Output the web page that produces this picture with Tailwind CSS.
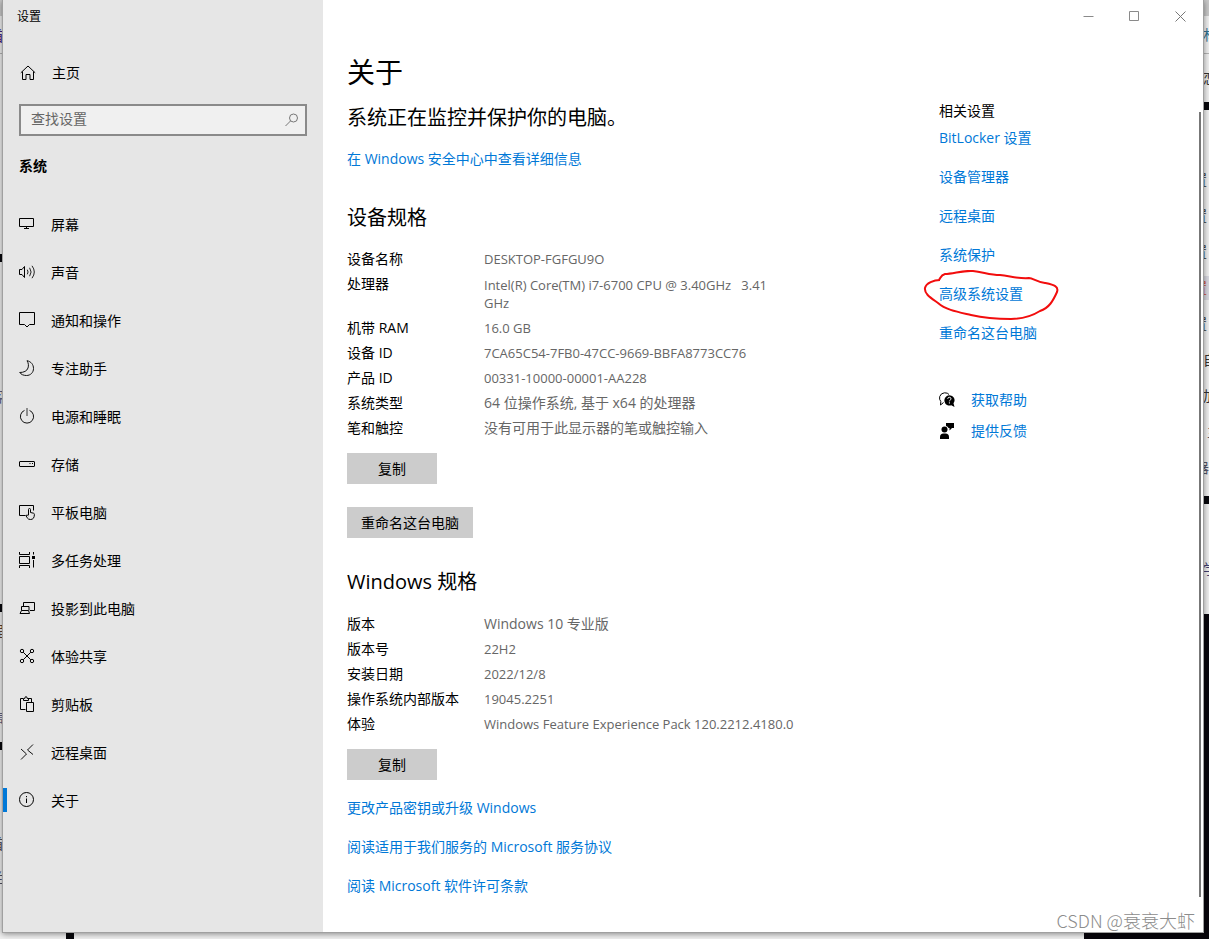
<!DOCTYPE html>
<html lang="zh-CN">
<head>
<meta charset="utf-8">
<title>设置</title>
<script src="https://cdn.jsdelivr.net/npm/@tailwindcss/browser@4"></script>
</head>
<body class="relative flex min-h-screen overflow-x-hidden bg-[#f0f0f0] pl-[2px] pr-[5px] pb-[6px] font-['Open_Sans','Noto_Sans_CJK_SC',sans-serif] text-sm leading-[18px] text-black">

<!-- Desktop behind the window -->
<div class="absolute inset-0 overflow-hidden" aria-hidden="true">
  <div class="absolute left-0 top-0 h-4 w-full bg-[#c8c8c8]"></div>
  <div class="absolute left-0 top-[53px] h-px w-full bg-[#b4b4b4]"></div>
  <div class="absolute left-0 top-[254px] h-2 w-1 bg-[#08080c]"></div>
  <div class="absolute left-0 top-[604px] h-2 w-1 bg-[#08080c]"></div>
  <div class="absolute left-0 top-[742px] h-2 w-1 bg-[#08080c]"></div>
  <div class="absolute -left-[10px] top-[27px] text-[#402080]">首</div>
  <div class="absolute -left-[10px] top-[388px] text-[#606080]">客</div>
  <div class="absolute -left-[10px] top-[622px] text-[#604030]">程</div>
  <div class="absolute -left-[10px] top-[708px] text-[#606080]">信</div>
  <div class="absolute -left-[10px] top-[835px] text-[#505060]">首</div>
  <div class="absolute -left-[10px] top-[869px] text-[#505060]">兰</div>
  <div class="absolute bottom-0 left-[66px] h-2 w-2 bg-[#08080c]"></div>
  <div class="absolute right-0 top-[102px] h-2 w-2 bg-[#08080c]"></div>
  <div class="absolute right-0 top-[276px] h-6 w-2 bg-[#d8d8e0]"></div>
  <div class="absolute right-0 top-[496px] h-2 w-2 bg-[#08080c]"></div>
  <div class="absolute -right-2 top-[26px] text-[#2f7090]">林</div>
  <div class="absolute -right-2 top-[69px] text-[#333333]">恋</div>
  <div class="absolute right-[2px] top-[171px] text-[#333333]">置</div>
  <div class="absolute right-[2px] top-[207px] text-[#333333]">置</div>
  <div class="absolute right-[2px] top-[243px] text-[#333333]">置</div>
  <div class="absolute right-[2px] top-[279px] text-[#d04a30]">置</div>
  <div class="absolute right-[2px] top-[315px] text-[#333333]">置</div>
  <div class="absolute -right-2 top-[351px] text-[#333333]">自</div>
  <div class="absolute -right-2 top-[387px] text-[#333333]">加</div>
  <div class="absolute -right-3 top-[423px] text-[#555566]">主</div>
  <div class="absolute right-0 top-[459px] text-[#555566]">器</div>
  <div class="absolute -right-2 top-[560px] text-[#404070]">学</div>
  <div class="absolute bottom-0 right-0 top-[614px] w-2 bg-[#08060c]"></div>
  <div class="absolute bottom-0 right-0 h-2 w-[125px] bg-[#08060c]"></div>
</div>

<!-- Settings window -->
<div class="relative flex grow border-x border-b border-[#a0a0a0] bg-white shadow-[0_1px_6px_rgba(0,0,0,0.45)]">

  <aside class="w-80 shrink-0 bg-[#e6e6e6]">
    <div class="pl-[14px] pt-2 text-xs leading-[18px]">设置</div>
    <a href="#home" class="mt-[38px] flex items-center gap-4 pl-[17px]">
      <svg class="size-4 shrink-0" viewBox="0 0 16 16" fill="none" stroke="#000"><path d="M.8 7.8 8 1l7.2 6.8M2.500 6.500v8h3.500v-5h4v5h3.500v-8"/></svg>
      主页
    </a>
    <div class="relative mx-4 mt-[22px]">
      <input type="text" aria-label="查找设置" placeholder="查找设置" class="block h-8 w-full rounded-none border-2 border-[#8a8a8a] bg-[#f0f0f0] pb-1 pl-[10px] pr-8 text-sm leading-[18px] placeholder:text-[#666666]">
      <svg class="absolute right-[7px] top-2 size-4" viewBox="0 0 16 16" fill="none" stroke="#777"><circle cx="9.500" cy="6" r="4"/><path d="M6.600 8.900 1.500 14"/></svg>
    </div>
    <h2 class="mt-[21px] pl-4 text-sm font-bold leading-[18px]">系统</h2>

    <nav class="mt-[25px]">
      <a href="#display" class="flex h-12 items-center gap-4 pl-4"><svg class="size-4 shrink-0" viewBox="0 0 16 16" fill="none" stroke="#000"><path d="M.5 2.500h14v8H.5zM7.500 10.500v2M5 12.500h5"/></svg><span class="pt-px">屏幕</span></a>
      <a href="#sound" class="flex h-12 items-center gap-4 pl-4"><svg class="size-4 shrink-0 overflow-visible" viewBox="0 0 16 16" fill="none" stroke="#000"><path d="M.5 5.500H3L5.500 2.500v11L3 10.500H.5z"/><path d="M8.300 5.700q1.500 2.300 0 4.600M10.600 3.800q3 4.200 0 8.400M13 1.800q4.600 6.200 0 12.400" stroke="#222"/></svg><span class="pt-px">声音</span></a>
      <a href="#notifications" class="flex h-12 items-center gap-4 pl-4"><svg class="size-4 shrink-0" viewBox="0 0 16 16" fill="none" stroke="#000"><path d="M.5.5h15v12h-5L8 15l-2.500-2.500h-5z"/></svg><span class="pt-px">通知和操作</span></a>
      <a href="#focus" class="flex h-12 items-center gap-4 pl-4"><svg class="size-4 shrink-0" viewBox="0 0 16 16" fill="none" stroke="#111"><path d="M8 .7C12 1.500 14.500 4.500 14.500 8.500c0 4-3 7-7 7-3 0-5.300-1-6.800-3C5 12.500 8 11 9 8c.8-2.500.5-5-1-7.300z"/></svg><span class="pt-px">专注助手</span></a>
      <a href="#power" class="flex h-12 items-center gap-4 pl-4"><svg class="size-4 shrink-0" viewBox="0 0 16 16" fill="none" stroke="#111"><path d="M5.500 2.400a6.600 6.600 0 1 0 5 0"/><path d="M8 0v8" stroke="#333"/></svg><span class="pt-px">电源和睡眠</span></a>
      <a href="#storage" class="flex h-12 items-center gap-4 pl-4"><svg class="size-4 shrink-0" viewBox="0 0 16 16" fill="none" stroke="#000"><rect x=".5" y="5.500" width="15" height="5" rx=".5"/><path d="M10.500 7.500h1M13 7.500h1"/></svg><span class="pt-px">存储</span></a>
      <a href="#tablet" class="flex h-12 items-center gap-4 pl-4"><svg class="size-4 shrink-0" viewBox="0 0 16 16" fill="none" stroke="#000"><path d="M6.500 11.500h-6v-10h14v5"/><path d="M9.500 11V5.500a1 1 0 0 1 2 0V8.500l3 .7q1 .3.900 1.300-.1 5-3.900 5-2.300 0-3.300-1.700L6.900 11.500q1.200-1 2.600.3"/></svg><span class="pt-px">平板电脑</span></a>
      <a href="#multitasking" class="flex h-12 items-center gap-4 pl-4"><svg class="size-4 shrink-0" viewBox="0 0 16 16" fill="none" stroke="#000"><path d="M.5 4.500h10v7H.5zM.5 0v2.500h10V0M.5 16v-2.500h10V16M14.500 0v2.500M14.500 8v7.500"/><path d="M13 4h3v3h-3z" fill="#000" stroke="none"/></svg><span class="pt-px">多任务处理</span></a>
      <a href="#projecting" class="flex h-12 items-center gap-4 pl-4"><svg class="size-4 shrink-0" viewBox="0 0 16 16" fill="none" stroke="#000"><path d="M4.500 6V2.500h11v8H11M2.500 10.500v-4H10v4M2.500 10.500 1 13.500h9.500l-1-3z"/></svg><span class="pt-px">投影到此电脑</span></a>
      <a href="#shared" class="flex h-12 items-center gap-4 pl-4"><svg class="size-4 shrink-0" viewBox="0 0 16 16" fill="none" stroke="#000"><circle cx="3" cy="3" r="1.700"/><circle cx="13" cy="3" r="1.700"/><circle cx="3" cy="13" r="1.700"/><circle cx="13" cy="13" r="1.700"/><path d="m4.200 4.200 7.600 7.600M11.800 4.200l-7.600 7.600"/></svg><span class="pt-px">体验共享</span></a>
      <a href="#clipboard" class="flex h-12 items-center gap-4 pl-4"><svg class="size-4 shrink-0" viewBox="0 0 16 16" fill="none" stroke="#000"><path d="M6.500 13.500h-5v-11H4M9 2.500h3.500v4M4.500 4.500v-2h1.300q.2-2 1.200-2t1.200 2h1.300v2zM7.500 6.500h7v9h-7z"/></svg><span class="pt-px">剪贴板</span></a>
      <a href="#remote" class="flex h-12 items-center gap-4 pl-4"><svg class="size-4 shrink-0" viewBox="0 0 16 16" fill="none" stroke="#111"><path d="m2 5 5.500 5L2 15.500M14 .5 8.500 6l5.500 4.500"/></svg><span class="pt-px">远程桌面</span></a>
      <a href="#about" aria-current="page" class="relative flex h-12 items-center gap-4 pl-4 before:absolute before:left-0 before:top-3 before:h-6 before:w-1 before:bg-[#0078d7] before:content-['']"><svg class="size-4 shrink-0" viewBox="0 0 16 16" fill="none" stroke="#000"><circle cx="7.500" cy="7.500" r="7"/><path d="M7.500 6.500V11M7.500 4v1.200"/></svg><span class="pt-px">关于</span></a>
    </nav>
  </aside>

  <main class="grid grow grid-cols-[minmax(0,1fr)_264px] pl-6">
    <div class="pt-[54px]">
      <h1 class="text-[28px] leading-9">关于</h1>
      <p class="mt-[14px] text-xl leading-7">系统正在监控并保护你的电脑。</p>
      <a href="#security" class="mt-[18px] block w-fit text-[#0078d7]">在 Windows 安全中心中查看详细信息</a>

      <h2 class="mt-9 text-xl leading-7">设备规格</h2>
      <table class="mt-[18px] w-[447px] table-fixed text-left">
        <colgroup><col class="w-[137px]"><col></colgroup>
        <tbody class="align-top [&_td]:pb-[7px] [&_td]:text-[#666666] [&_th]:pb-[7px] [&_th]:font-normal">
          <tr><th scope="row">设备名称</th><td class="text-[13px]">DESKTOP-FGFGU9O</td></tr>
          <tr><th scope="row">处理器</th><td class="pt-px text-[13px]">Intel(R) Core(TM) i7-6700 CPU @ 3.40GHz&nbsp;&nbsp; 3.41 GHz</td></tr>
          <tr><th scope="row">机带 RAM</th><td class="text-[13px]">16.0 GB</td></tr>
          <tr><th scope="row">设备 ID</th><td class="text-[13px]">7CA65C54-7FB0-47CC-9669-BBFA8773CC76</td></tr>
          <tr><th scope="row">产品 ID</th><td class="text-[13px]">00331-10000-00001-AA228</td></tr>
          <tr><th scope="row">系统类型</th><td>64 位操作系统, 基于 x64 的处理器</td></tr>
          <tr><th scope="row">笔和触控</th><td>没有可用于此显示器的笔或触控输入</td></tr>
        </tbody>
      </table>
      <button type="button" class="mt-[9px] block h-[31px] w-[90px] bg-[#cccccc]">复制</button>
      <button type="button" class="mt-[23px] block h-[31px] bg-[#cccccc] px-[14px]">重命名这台电脑</button>

      <h2 class="mt-[30px] text-xl leading-7">Windows 规格</h2>
      <table class="mt-[19px] w-[447px] table-fixed text-left">
        <colgroup><col class="w-[137px]"><col></colgroup>
        <tbody class="align-top [&_td]:pb-[7px] [&_td]:text-[#666666] [&_th]:pb-[7px] [&_th]:font-normal">
          <tr><th scope="row">版本</th><td>Windows 10 专业版</td></tr>
          <tr><th scope="row">版本号</th><td class="text-[13px]">22H2</td></tr>
          <tr><th scope="row">安装日期</th><td class="text-[13px]">2022/12/8</td></tr>
          <tr><th scope="row">操作系统内部版本</th><td class="text-[13px]">19045.2251</td></tr>
          <tr><th scope="row">体验</th><td class="text-[13px]">Windows Feature Experience Pack 120.2212.4180.0</td></tr>
        </tbody>
      </table>
      <button type="button" class="mt-[9px] block h-[31px] w-[90px] bg-[#cccccc]">复制</button>
      <div class="mt-[19px] flex flex-col items-start gap-[21px] text-[#0078d7]">
        <a href="#key">更改产品密钥或升级 Windows</a>
        <a href="#services">阅读适用于我们服务的 Microsoft 服务协议</a>
        <a href="#license">阅读 Microsoft 软件许可条款</a>
      </div>
    </div>

    <div class="flex flex-col">
      <div class="flex h-8 justify-end">
        <button type="button" aria-label="最小化" class="grid w-[46px] place-items-center"><svg class="size-[11px]" viewBox="0 0 11 11" fill="none" stroke="#8a8a8a"><path d="M.5 5.500h10"/></svg></button>
        <button type="button" aria-label="最大化" class="grid w-[46px] place-items-center"><svg class="size-[11px]" viewBox="0 0 11 11" fill="none" stroke="#8a8a8a"><path d="M.5.5h9v9h-9z"/></svg></button>
        <button type="button" aria-label="关闭" class="grid w-[46px] place-items-center"><svg class="size-[11px]" viewBox="0 0 11 11" fill="none" stroke="#777"><path d="m.5.5 10 10M10.500.5l-10 10"/></svg></button>
      </div>
      <h2 class="mt-[70px]">相关设置</h2>
      <div class="mt-[9px] flex flex-col items-start gap-[21px] text-[#0078d7]">
        <a href="#bitlocker">BitLocker 设置</a>
        <a href="#devices">设备管理器</a>
        <a href="#rdp">远程桌面</a>
        <a href="#protection">系统保护</a>
        <a href="#advanced" class="relative">高级系统设置
          <svg class="pointer-events-none absolute -left-4 -top-[15px] h-[50px] w-[136px]" viewBox="0 0 136 50" fill="none" stroke="#f20d0d" stroke-width="2" stroke-linejoin="round" aria-hidden="true"><path d="M17 10C11 10 3 13 2 18C1 24 8 28 15 33C23 40 35 42 48 45C61 48 74 49 88 49C101 49 109 46 117 41C126 38 130 31 134 22C136 16 131 15 122 13C114 12 110 8 106 8C96 9 87 6 77 5C67 5 60 2 50 1C41 0 30 4 22 4C18 5 18 7 16 10"/></svg>
        </a>
        <a href="#rename">重命名这台电脑</a>
      </div>
      <div class="mt-[49px] flex flex-col items-start gap-[13px] text-[#0078d7]">
        <a href="#help" class="flex items-center gap-4">
          <svg class="size-4 shrink-0" viewBox="0 0 16 16"><path d="M4.500 10.500 1.500 13l.3-3.500Q0 7.500.700 4.500 2 1 5.500.800 8.800.700 10 2.500" fill="none" stroke="#000"/><path d="M10.300 3.200a5 5 0 0 1 4.200 8l1 3.800-3.200-1.700A5.200 5.200 0 1 1 10.300 3.200z"/><path d="M8.700 6.800q.2-1.500 1.700-1.500T12 6.800q0 .8-.8 1.300t-.8 1.200M10.400 10.300v1.200" stroke="#fff" fill="none"/></svg>
          获取帮助
        </a>
        <a href="#feedback" class="flex items-center gap-4">
          <svg class="size-4 shrink-0" viewBox="0 0 16 16"><circle cx="5.500" cy="6.500" r="3"/><path d="M1 16v-2q0-3.500 3.500-3.500h2q3.500 0 3.500 3.500v2zM7 0h8v5h-2l-2.500 2.500V5H9.500Q9 3.300 7 3z"/></svg>
          提供反馈
        </a>
      </div>
    </div>
  </main>

  <!-- Scroll thumb -->
  <div class="absolute bottom-[35px] right-[2px] top-28 w-[2px] bg-[#777777]" aria-hidden="true"></div>
  <!-- Watermark -->
  <div class="absolute bottom-0 right-2 font-['Noto_Sans_CJK_SC',sans-serif] text-lg font-light leading-6 text-[#8c8c8c]">CSDN @衰衰大虾</div>
</div>
</body>
</html>
